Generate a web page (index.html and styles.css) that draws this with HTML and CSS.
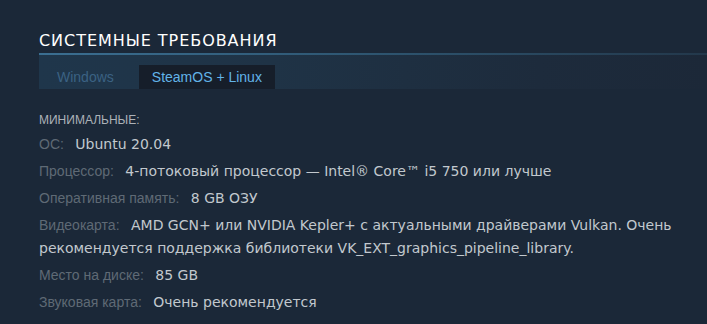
FILE: index.html
```html
<!DOCTYPE html>
<html lang="ru">
<head>
<meta charset="utf-8">
<title>Системные требования</title>
<link rel="stylesheet" href="styles.css">
</head>
<body>
<section class="sysreq">
  <h2 class="sysreq-title">Системные требования</h2>
  <div class="sysreq-tabs">
    <div class="tab">Windows</div>
    <div class="tab tab-active">SteamOS + Linux</div>
  </div>
  <div class="sysreq-contents">
    <div class="sysreq-head">Минимальные:</div>
    <ul class="sysreq-list">
      <li><span class="label">ОС:</span> <span class="value">Ubuntu 20.04</span></li>
      <li><span class="label">Процессор:</span> <span class="value">4-потоковый процессор — Intel® Core™ i5 750 или лучше</span></li>
      <li><span class="label">Оперативная память:</span> <span class="value">8 GB ОЗУ</span></li>
      <li><span class="label">Видеокарта:</span> <span class="value">AMD GCN+ или NVIDIA Kepler+ с актуальными драйверами Vulkan. Очень рекомендуется поддержка библиотеки VK_EXT_graphics_pipeline_library.</span></li>
      <li><span class="label">Место на диске:</span> <span class="value">85 GB</span></li>
      <li><span class="label">Звуковая карта:</span> <span class="value">Очень рекомендуется</span></li>
    </ul>
  </div>
</section>
</body>
</html>
```
FILE: styles.css
```css
html, body {
  margin: 0;
  padding: 0;
  background: #1b2838;
}

.sysreq {
  margin-left: 39px;
  padding-top: 31px;
}

.sysreq-title {
  margin: 0;
  padding-bottom: 2px;
  font-family: "DejaVu Sans", sans-serif;
  font-weight: normal;
  font-size: 16px;
  line-height: 20px;
  letter-spacing: 0.95px;
  text-transform: uppercase;
  color: #ffffff;
}

.sysreq-tabs {
  display: flex;
  align-items: flex-end;
  gap: 12px;
  height: 34px;
  padding-left: 5px;
  border-top: 2px solid transparent;
  border-image: linear-gradient(90deg, #3b6f92 0%, #2f5874 45%, #23384b 100%) 1;
  border-bottom: 0;
  border-left: 0;
  border-right: 0;
  background: linear-gradient(90deg, #1f364b 0%, #1f3346 35%, #1d2b3c 75%, #1c2838 100%);
  font-family: "Liberation Sans", Arial, sans-serif;
  font-size: 14px;
}

.tab {
  height: 24px;
  line-height: 24px;
  padding: 0 13px;
  color: #3b6283;
}

.tab-active {
  background: #161e2a;
  color: #62b3e8;
}

.sysreq-contents {
  padding-top: 23px;
}

.sysreq-head {
  font-family: "Liberation Sans", Arial, sans-serif;
  font-size: 12px;
  line-height: 16px;
  text-transform: uppercase;
  color: #acb2b8;
  margin-bottom: 5px;
}

.sysreq-list {
  list-style: none;
  margin: 0;
  padding: 0;
  width: 640px;
}

.sysreq-list li {
  font-family: "DejaVu Sans", sans-serif;
  font-size: 14px;
  line-height: 23px;
  margin-bottom: 4px;
  color: #c2c8ce;
}

.label {
  font-family: "Liberation Sans", Arial, sans-serif;
  font-size: 14px;
  line-height: 1;
  color: #5f6a75;
  margin-right: 7px;
}

.value {
  color: #c2c8ce;
}
```
